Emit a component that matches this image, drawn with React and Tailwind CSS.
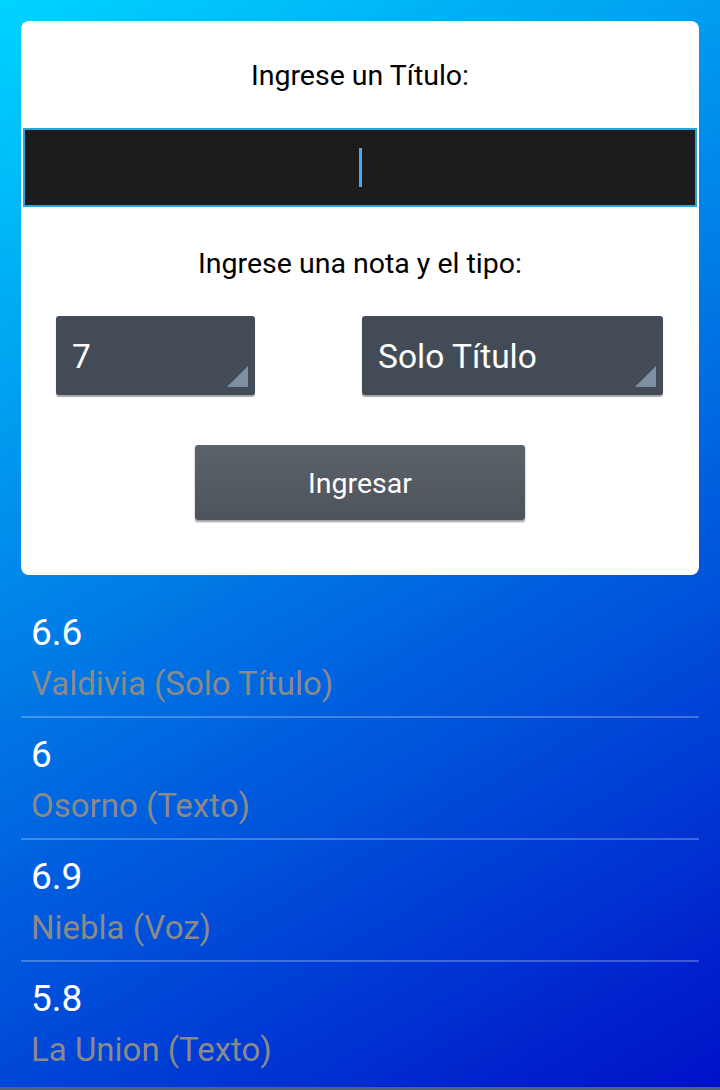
const ROWS = [
  { nota: '6.6', label: 'Valdivia (Solo Título)' },
  { nota: '6', label: 'Osorno (Texto)' },
  { nota: '6.9', label: 'Niebla (Voz)' },
  { nota: '5.8', label: 'La Union (Texto)' },
]

function Spinner({ value, width }) {
  return (
    <div className={`relative ${width} h-[79px] rounded-[3px] bg-[#434c56] shadow-[0_2px_1px_rgba(0,0,0,0.35)] flex items-center pl-[16px] pt-[2px] text-white text-[33.5px] leading-none`}>
      {value}
      <span className="absolute right-[7px] bottom-[8px] w-[21px] h-[21px] bg-[#7f8fa3] [clip-path:polygon(100%_0,100%_100%,0_100%)]" />
    </div>
  )
}

export default function App() {
  return (
    <div
      className="w-[720px] h-[1090px] overflow-hidden flex flex-col bg-[linear-gradient(150deg,#00d4ff,#0010c8)]"
      style={{ fontFamily: 'Roboto, "Liberation Sans", sans-serif' }}
    >
      <div className="mx-[21px] mt-[21px] bg-white rounded-[8px] flex flex-col items-center pt-[35px] pb-[55px]">
        <p className="text-[28.5px] leading-[40px] text-black">Ingrese un Título:</p>

        <div className="mt-[32px] w-[674px] h-[79px] border-2 border-[#2aa5dc] bg-[#1c1c1c] flex items-center justify-center">
          <span className="w-[3px] h-[39px] bg-[#4aa9ee]" />
        </div>

        <p className="mt-[37px] text-[28.5px] leading-[40px] text-black">Ingrese una nota y el tipo:</p>

        <div className="mt-[32px] w-full pl-[35px] pr-[36px] flex justify-between">
          <Spinner value="7" width="w-[199px]" />
          <Spinner value="Solo Título" width="w-[301px]" />
        </div>

        <button className="mt-[50px] w-[330px] h-[75px] pt-[3px] rounded-[3px] bg-[linear-gradient(to_bottom,#5c6269,#4e545b)] shadow-[0_2px_2px_rgba(0,0,0,0.4)] text-white text-[28.5px]">
          Ingresar
        </button>
      </div>

      <div className="mt-[21px] mx-[21px] flex flex-col">
        {ROWS.map((row, i) => (
          <div
            key={row.nota + row.label}
            className={`h-[122px] pl-[10px] pt-[15px] ${i < ROWS.length - 1 ? 'border-b-2 border-white/25' : ''}`}
          >
            <div className="text-[37px] leading-[44px] text-white">{row.nota}</div>
            <div className="mt-[9px] text-[33px] leading-[40px] text-[#8a8a8a]">{row.label}</div>
          </div>
        ))}
      </div>

      <div className="mt-auto h-[3px] bg-[#4e6478]" />
    </div>
  )
}
